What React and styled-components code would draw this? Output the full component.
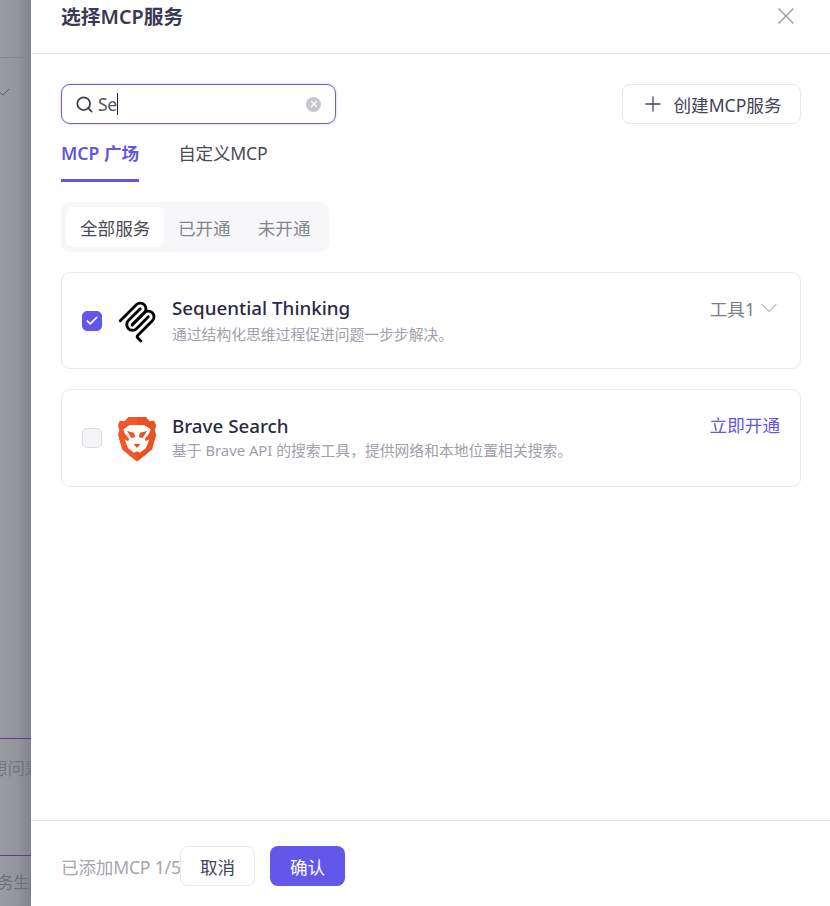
import React from "react"
import styled, { createGlobalStyle } from "styled-components"
import { Search, Plus, X, ChevronDown, Check } from "lucide-react"

const GlobalStyle = createGlobalStyle`
  * {
    box-sizing: border-box;
  }
  html,
  body {
    margin: 0;
    padding: 0;
    background: #fff;
    font-family: "Noto Sans", "Noto Sans CJK SC", sans-serif;
    overflow: hidden;
  }
`

const Page = styled.div`
  display: flex;
  height: 906px;
  width: 830px;
  overflow: hidden;
`

const Backdrop = styled.aside`
  width: 31px;
  flex-shrink: 0;
  display: flex;
  flex-direction: column;
  overflow: hidden;
  background: linear-gradient(90deg, #9b9ba4 0%, #94949d 55%, #83838d 100%);
`

const BackdropTop = styled.div`
  height: 58px;
  border-bottom: 1px solid #85858e;
`

const BackdropCheck = styled.div`
  height: 680px;
  padding: 28px 0 0 0;
  margin-left: -2px;
  color: #55555f;
  line-height: 0;
`

const BackdropInput = styled.div`
  height: 118px;
  border-top: 1px solid #5d3b94;
  border-bottom: 1px solid #5d3b94;
  padding-top: 17px;
  font-size: 17.6px;
  line-height: 24px;
  color: #74747e;
  white-space: nowrap;
  text-indent: -10px;
`

const BackdropNote = styled.div`
  padding-top: 16px;
  font-size: 15.4px;
  line-height: 22px;
  color: #6f6f79;
  white-space: nowrap;
  text-indent: -2px;
`

const Panel = styled.main`
  flex: 1;
  display: flex;
  flex-direction: column;
  background: #fff;
  min-width: 0;
`

const Header = styled.header`
  height: 54px;
  flex-shrink: 0;
  display: flex;
  justify-content: space-between;
  padding: 3px 34px 0 30px;
  border-bottom: 1px solid #e8e8ec;
`

const Title = styled.h1`
  margin: 0;
  font-size: 19.8px;
  line-height: 28px;
  font-weight: 600;
  color: #3b3a52;
`

const CloseButton = styled.button`
  border: 0;
  background: none;
  padding: 0;
  margin-top: 3px;
  height: 20px;
  width: 20px;
  color: #9a9aa2;
  display: flex;
  align-items: center;
  justify-content: center;
`

const Body = styled.section`
  flex: 1;
  display: flex;
  flex-direction: column;
  padding: 30px 29px 0 30px;
`

const TopRow = styled.div`
  display: flex;
  justify-content: space-between;
`

const SearchBox = styled.div`
  width: 275px;
  height: 40px;
  display: flex;
  align-items: center;
  padding: 0 14px 0 13px;
  border: 1px solid #6a5fdc;
  border-radius: 9px;
  box-shadow: 0 0 3px rgba(106, 95, 220, 0.35);
  color: #3f3f4c;
`

const SearchValue = styled.span`
  flex: 1;
  margin-left: 4px;
  font-size: 17.6px;
  line-height: 24px;
  letter-spacing: -0.3px;
  display: flex;
  align-items: center;
  color: #55555f;
`

const Caret = styled.i`
  display: block;
  width: 1px;
  height: 22px;
  background: #22222c;
`

const ClearIcon = styled.span`
  width: 15px;
  height: 15px;
  border-radius: 50%;
  background: #c6c6cd;
  color: #fff;
  display: flex;
  align-items: center;
  justify-content: center;
`

const OutlineButton = styled.button`
  height: 40px;
  border: 1px solid #e9e9ee;
  border-radius: 8px;
  background: #fff;
  color: #44445a;
  font: inherit;
  font-size: 17.6px;
  display: flex;
  align-items: center;
  justify-content: center;
  gap: ${props => props.$gap || 0}px;
  padding: 0;
  width: ${props => props.$width}px;
`

const Tabs = styled.nav`
  display: flex;
  gap: 39px;
  margin-top: 8px;
`

const Tab = styled.a`
  height: 50px;
  padding-top: 9px;
  font-size: 17.6px;
  line-height: 24px;
  letter-spacing: ${props => (props.$active ? 0 : "-0.2px")};
  font-weight: ${props => (props.$active ? 600 : 400)};
  color: ${props => (props.$active ? "#6257dd" : "#4a4a58")};
  border-bottom: 3px solid
    ${props => (props.$active ? "#6257dd" : "transparent")};
`

const Segments = styled.div`
  align-self: flex-start;
  display: flex;
  margin-top: 20px;
  padding: 5px;
  height: 50px;
  border-radius: 9px;
  background: #f7f7f9;
`

const Segment = styled.span`
  display: flex;
  align-items: center;
  padding: 0 ${props => (props.$active ? 14 : 13.5)}px;
  border-radius: 7px;
  font-size: 17.6px;
  color: ${props => (props.$active ? "#4a4a58" : "#85858f")};
  background: ${props => (props.$active ? "#fff" : "transparent")};
`

const Cards = styled.div`
  display: flex;
  flex-direction: column;
  gap: 20px;
  margin-top: 20px;
`

const Card = styled.article`
  height: ${props => props.$height}px;
  display: flex;
  padding: ${props => props.$top}px 20px 0 20px;
  border: 1px solid #e9e9ee;
  border-radius: 9px;
`

const CheckBox = styled.span`
  width: 20px;
  height: 20px;
  flex-shrink: 0;
  margin-top: ${props => props.$offset}px;
  border-radius: 5px;
  display: flex;
  align-items: center;
  justify-content: center;
  color: #fff;
  border: 1px solid ${props => (props.$checked ? "#6257e8" : "#d9d9df")};
  background: ${props => (props.$checked ? "#6257e8" : "#f5f5f8")};
`

const Logo = styled.svg`
  width: 38px;
  flex-shrink: 0;
  margin-left: 16px;
  margin-top: ${props => props.$offset}px;
  height: ${props => props.$h}px;
`

const CardText = styled.div`
  flex: 1;
  margin-left: 16px;
  min-width: 0;
`

const CardTitle = styled.h2`
  margin: 0;
  font-size: 18.8px;
  line-height: 25px;
  font-weight: 500;
  color: #2a2945;
`

const CardDesc = styled.p`
  margin: ${props => props.$gap}px 0 0;
  font-size: 14.8px;
  line-height: 20px;
  color: #a0a0aa;
`

const Tools = styled.span`
  display: flex;
  align-items: center;
  height: 24px;
  margin-right: -3px;
  font-size: 17.6px;
  color: #7c7c86;
`

const OpenLink = styled.a`
  font-size: 17.6px;
  line-height: 24px;
  margin-top: -1px;
  color: #6257dd;
`

const Footer = styled.footer`
  height: 86px;
  flex-shrink: 0;
  display: flex;
  align-items: flex-start;
  padding: 25px 0 0 30px;
  border-top: 1px solid #e8e8ec;
`

const AddedCount = styled.span`
  width: 119px;
  height: 40px;
  display: flex;
  align-items: center;
  font-size: 17.6px;
  letter-spacing: -0.2px;
  white-space: nowrap;
  color: #a5a5ae;
`

const PrimaryButton = styled(OutlineButton)`
  margin-left: 15px;
  border: 0;
  background: #6257e8;
  color: #fff;
`

const CloseIcon = () => (
  <svg width="18" height="18" viewBox="0 0 18 18" fill="none" stroke="currentColor" strokeWidth="1.4">
    <path d="M1.5 1.5 L16.5 16.5 M16.5 1.5 L1.5 16.5" />
  </svg>
)

const SequentialLogo = () => (
  <Logo viewBox="17 14 158 178" $offset={5} $h={42}>
    <g fill="none" stroke="#000" strokeWidth="12" strokeLinecap="round">
      <path d="M25 97.85L92.88 29.97C102.26 20.6 117.45 20.6 126.82 29.97C136.2 39.34 136.2 54.54 126.82 63.91L75.56 115.18" />
      <path d="M76.27 114.47L126.82 63.91C136.2 54.54 151.39 54.54 160.77 63.91L161.12 64.27C170.49 73.64 170.49 88.83 161.12 98.21L99.72 159.6C96.6 162.72 96.6 167.79 99.72 170.91L112.33 183.52" />
      <path d="M109.85 46.94L59.65 97.15C50.28 106.52 50.28 121.71 59.65 131.09C69.02 140.46 84.22 140.46 93.59 131.09L143.79 80.88" />
    </g>
  </Logo>
)

const BraveLogo = () => (
  <Logo viewBox="174 76 114 138" $offset={2} $h={46}>
    <path
      d="M206 81 L256 81 L268 94 L281 92 L286 104 L282 120 L286 132 L274 175 L253 193 L231 210 L209 193 L188 175 L176 132 L180 120 L176 104 L181 92 L194 94 Z"
      fill="#f0582a"
      stroke="#f0582a"
      strokeWidth="4"
      strokeLinejoin="round"
    />
    <path
      d="M231 212 L254 194 L276 176 L288 132 L284 120 L288 104 L282 90 L269 93 L258 79 L231 79 Z"
      fill="#eb5020"
    />
    <path
      d="M210 103 L252 103 L272 116 L268 128 L254 146 L258 152 L268 146 L258 172 L240 186 L231 182 L222 186 L204 172 L194 146 L204 152 L208 146 L194 128 L190 116 Z"
      fill="#fff"
    />
    <path d="M201 121 L222 126 L226 140 L214 142 Z" fill="#f0582a" />
    <path d="M261 121 L240 126 L236 140 L248 142 Z" fill="#eb5020" />
    <path d="M221 160 L241 160 L231 172 Z" fill="#eb5020" />
  </Logo>
)

const App = () => (
  <Page>
    <GlobalStyle />
    <Backdrop>
      <BackdropTop />
      <BackdropCheck>
        <Check size={13} strokeWidth={1.6} />
      </BackdropCheck>
      <BackdropInput>想问题</BackdropInput>
      <BackdropNote>务生成</BackdropNote>
    </Backdrop>
    <Panel>
      <Header>
        <Title>选择MCP服务</Title>
        <CloseButton aria-label="关闭">
          <CloseIcon />
        </CloseButton>
      </Header>
      <Body>
        <TopRow>
          <SearchBox>
            <Search size={19} strokeWidth={2.2} />
            <SearchValue>
              Se
              <Caret />
            </SearchValue>
            <ClearIcon>
              <X size={10} strokeWidth={3} />
            </ClearIcon>
          </SearchBox>
          <OutlineButton $width={179} $gap={8}>
            <Plus size={24} strokeWidth={1.3} />
            创建MCP服务
          </OutlineButton>
        </TopRow>
        <Tabs>
          <Tab $active>MCP 广场</Tab>
          <Tab>自定义MCP</Tab>
        </Tabs>
        <Segments>
          <Segment $active>全部服务</Segment>
          <Segment>已开通</Segment>
          <Segment>未开通</Segment>
        </Segments>
        <Cards>
          <Card $height={97} $top={23}>
            <CheckBox $checked $offset={15}>
              <Check size={14} strokeWidth={3} />
            </CheckBox>
            <SequentialLogo />
            <CardText>
              <CardTitle>Sequential Thinking</CardTitle>
              <CardDesc $gap={3}>通过结构化思维过程促进问题一步步解决。</CardDesc>
            </CardText>
            <Tools>
              工具1
              <ChevronDown size={28} strokeWidth={0.9} color="#a5a5ae" />
            </Tools>
          </Card>
          <Card $height={98} $top={24}>
            <CheckBox $offset={14} />
            <BraveLogo />
            <CardText>
              <CardTitle>Brave Search</CardTitle>
              <CardDesc $gap={1}>基于 Brave API 的搜索工具，提供网络和本地位置相关搜索。</CardDesc>
            </CardText>
            <OpenLink>立即开通</OpenLink>
          </Card>
        </Cards>
      </Body>
      <Footer>
        <AddedCount>已添加MCP 1/5</AddedCount>
        <OutlineButton $width={75}>取消</OutlineButton>
        <PrimaryButton $width={75}>确认</PrimaryButton>
      </Footer>
    </Panel>
  </Page>
)

export default App
